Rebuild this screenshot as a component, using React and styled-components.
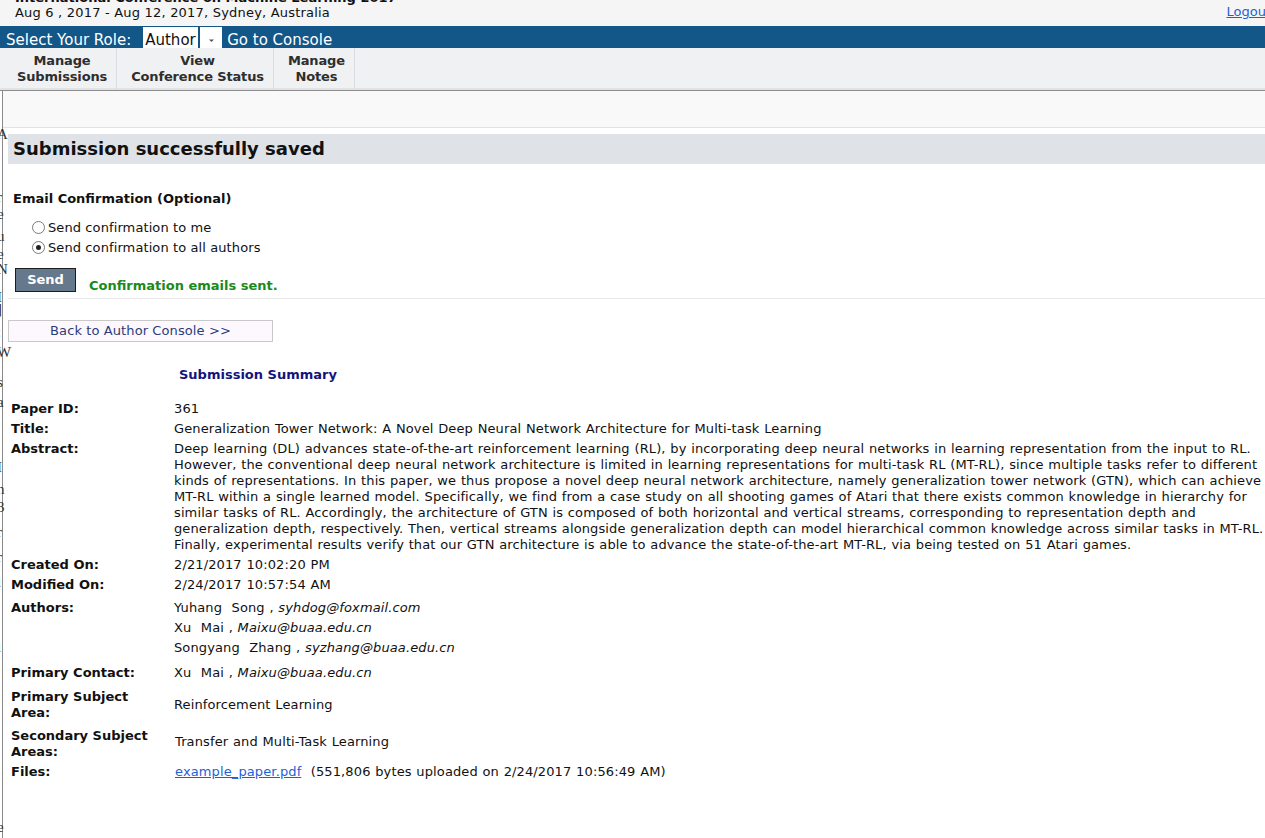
import React from "react";
import styled, { createGlobalStyle } from "styled-components";

const GlobalStyle = createGlobalStyle`
  html, body { margin: 0; padding: 0; background: #ffffff; }
  body {
    font-family: "DejaVu Sans", Verdana, sans-serif;
    font-size: 13px;
    color: #111;
    overflow: hidden;
    width: 1265px;
    height: 838px;
  }
  * { box-sizing: border-box; }
`;

const Page = styled.div`
  width: 1265px;
  height: 838px;
  overflow: hidden;
  display: flex;
  flex-direction: column;
`;

const TopHeader = styled.header`
  height: 26px;
  background: #f5f5f5;
  display: flex;
  justify-content: space-between;
  align-items: flex-start;
  padding-left: 15px;
  overflow: hidden;
`;

const ConfInfo = styled.div`
  display: flex;
  flex-direction: column;
  margin-top: -10px;
  line-height: 16px;
`;

const ConfTitle = styled.div`
  font-weight: bold;
  color: #111;
`;

const ConfDates = styled.div`
  color: #111;
  margin-top: -1px;
  letter-spacing: 0.2px;
`;

const LogoutLink = styled.a`
  color: #1f5fd6;
  text-decoration: underline;
  margin-top: 4px;
  margin-right: -6px;
  line-height: 16px;
  white-space: nowrap;
  cursor: pointer;
`;

const RoleBar = styled.div`
  height: 22px;
  background: #125787;
  display: flex;
  align-items: flex-start;
  padding: 5px 0 0 6px;
  color: #ffffff;
  font-size: 15px;
  line-height: 18px;
  overflow: hidden;
`;

const RoleLabel = styled.span`
  margin-right: 12px;
`;

const SelectBox = styled.div`
  display: flex;
  height: 22px;
  margin-top: -4px;
  gap: 2px;
  color: #111;
`;

const SelectValue = styled.div`
  background: #ffffff;
  width: 55px;
  padding: 4px 0 0 2px;
  line-height: 18px;
`;

const SelectButton = styled.div`
  background: #ffffff;
  width: 22px;
  display: flex;
  align-items: center;
  justify-content: center;
  padding-top: 5px;
`;

const ConsoleLink = styled.span`
  margin-left: 5px;
`;

const NavBar = styled.nav`
  height: 43px;
  background: #f0f1f3;
  display: flex;
  padding-left: 3px;
  border-bottom: 1px solid #8e8e8e;
  box-shadow: inset 0 -2px 0 #e2e3e5;
`;

const NavItem = styled.div`
  display: flex;
  flex-direction: column;
  align-items: center;
  justify-content: center;
  margin-left: 5px;
  padding: 0 9px;
  border-right: 1px solid #dcdde0;
  font-weight: bold;
  color: #2e2e2e;
  line-height: 16px;
  letter-spacing: -0.15px;
  text-align: center;
`;

const Lower = styled.div`
  flex: 1;
  display: flex;
  min-height: 0;
`;

const Gutter = styled.div`
  width: 3px;
  flex-shrink: 0;
  border-right: 1px solid #8a8a8a;
  display: flex;
  flex-direction: column;
  padding-top: 36px;
  font-family: "Liberation Serif", serif;
  font-size: 15px;
  line-height: 15px;
  color: #333;
  white-space: nowrap;
`;

const StrayGlyph = styled.span`
  display: block;
  margin-top: ${(p) => p.$top}px;
  margin-left: -3px;
`;

const Main = styled.div`
  flex: 1;
  display: flex;
  flex-direction: column;
  min-width: 0;
`;

const GreyStrip = styled.div`
  height: 37px;
  background: #f9f9f9;
  border-bottom: 1px solid #e2e2e2;
`;

const Content = styled.div`
  padding-left: 5px;
  display: flex;
  flex-direction: column;
`;

const TitleBar = styled.h1`
  margin: 6px 0 0;
  height: 30px;
  background: #dfe3e7;
  font-size: 18px;
  font-weight: bold;
  line-height: 30px;
  padding-left: 5px;
  color: #111;
`;

const SectionHeading = styled.div`
  margin: 27px 0 0 5px;
  font-weight: bold;
  line-height: 16px;
`;

const RadioList = styled.div`
  margin: 12px 0 0 24px;
  display: flex;
  flex-direction: column;
  gap: 4px;
  letter-spacing: 0.1px;
`;

const RadioRow = styled.label`
  display: flex;
  align-items: center;
  height: 16px;
  gap: 3px;
`;

const RadioCircle = styled.span`
  width: 13px;
  height: 13px;
  border-radius: 50%;
  border: 1px solid #7a7a7a;
  background: #ffffff;
  display: flex;
  align-items: center;
  justify-content: center;
  &::after {
    content: "";
    width: 5px;
    height: 5px;
    border-radius: 50%;
    background: ${(p) => (p.$checked ? "#222" : "transparent")};
  }
`;

const SendRow = styled.div`
  display: flex;
  align-items: flex-end;
  margin-top: 13px;
  gap: 13px;
  padding: 0 0 6px 7px;
  border-bottom: 1px solid #e8e8e8;
`;

const SendButton = styled.button`
  width: 61px;
  height: 24px;
  background: #66788b;
  border: 1px solid #1c1c1c;
  color: #ffffff;
  font-family: "DejaVu Sans", Verdana, sans-serif;
  font-weight: bold;
  font-size: 13px;
  padding: 0 0 2px;
`;

const StatusText = styled.span`
  color: #1a8a1a;
  font-weight: bold;
  line-height: 16px;
  margin-bottom: -2px;
`;

const BackBox = styled.div`
  margin-top: 21px;
  width: 265px;
  height: 22px;
  border: 1px solid #c9c9c9;
  background: #fdf8fd;
  color: #2b3c7a;
  text-align: center;
  line-height: 20px;
  letter-spacing: 0.1px;
`;

const SummaryHeading = styled.div`
  margin: 25px 0 0 171px;
  color: #14137d;
  font-weight: bold;
  line-height: 16px;
`;

const Summary = styled.div`
  margin: 16px 0 0 3px;
  display: flex;
  flex-direction: column;
`;

const Row = styled.div`
  display: grid;
  grid-template-columns: 163px 1fr;
  padding: 2px 0;
  margin-top: ${(p) => p.$mt || 0}px;
  line-height: 16px;
`;

const Label = styled.div`
  font-weight: bold;
  align-self: start;
`;

const Value = styled.div`
  align-self: ${(p) => (p.$middle ? "center" : "start")};
  margin-left: ${(p) => p.$shift || 0}px;
  margin-top: ${(p) => p.$mt || 0}px;
  letter-spacing: 0.12px;
  word-spacing: 0.45px;
  white-space: ${(p) => (p.$pre ? "pre" : "normal")};
`;

const AuthorLine = styled.div`
  line-height: 20px;
  white-space: pre;
`;

const Email = styled.i`
  font-style: italic;
`;

const FileLink = styled.a`
  color: #1f5fd6;
  text-decoration: underline;
  cursor: pointer;
`;

const abstractLines = [
  "Deep learning (DL) advances state-of-the-art reinforcement learning (RL), by incorporating deep neural networks in learning representation from the input to RL.",
  "However, the conventional deep neural network architecture is limited in learning representations for multi-task RL (MT-RL), since multiple tasks refer to different",
  "kinds of representations. In this paper, we thus propose a novel deep neural network architecture, namely generalization tower network (GTN), which can achieve",
  "MT-RL within a single learned model. Specifically, we find from a case study on all shooting games of Atari that there exists common knowledge in hierarchy for",
  "similar tasks of RL. Accordingly, the architecture of GTN is composed of both horizontal and vertical streams, corresponding to representation depth and",
  "generalization depth, respectively. Then, vertical streams alongside generalization depth can model hierarchical common knowledge across similar tasks in MT-RL.",
  "Finally, experimental results verify that our GTN architecture is able to advance the state-of-the-art MT-RL, via being tested on 51 Atari games.",
];

const strays = [
  { c: "A", t: 0 },
  { c: "r", t: 48 },
  { c: "e", t: 2 },
  { c: "u", t: 7 },
  { c: "e", t: 3 },
  { c: "N", t: 0 },
  { c: "I", t: 13 },
  { c: "]", t: -3 },
  { c: ":", t: 8 },
  { c: "W", t: 5 },
  { c: "s", t: 15 },
  { c: "a", t: 5 },
  { c: "I", t: 50 },
  { c: "n", t: 7 },
  { c: "3", t: 3 },
  { c: "r", t: 10 },
  { c: "r", t: 10 },
  { c: "l", t: 10 },
  { c: "l", t: 50 },
  { c: "e", t: 165 },
];

const Arrow = () => (
  <svg width="7" height="4" viewBox="0 0 7 4">
    <path d="M1 0.5 L3.5 3 L6 0.5 Z" fill="#555" />
  </svg>
);

export default function App() {
  return (
    <>
      <GlobalStyle />
      <Page>
        <TopHeader>
          <ConfInfo>
            <ConfTitle>International Conference on Machine Learning 2017</ConfTitle>
            <ConfDates>Aug 6 , 2017 - Aug 12, 2017, Sydney, Australia</ConfDates>
          </ConfInfo>
          <LogoutLink>Logout</LogoutLink>
        </TopHeader>
        <RoleBar>
          <RoleLabel>Select Your Role:</RoleLabel>
          <SelectBox>
            <SelectValue>Author</SelectValue>
            <SelectButton>
              <Arrow />
            </SelectButton>
          </SelectBox>
          <ConsoleLink>Go to Console</ConsoleLink>
        </RoleBar>
        <NavBar>
          <NavItem>
            <span>Manage</span>
            <span>Submissions</span>
          </NavItem>
          <NavItem>
            <span>View</span>
            <span>Conference Status</span>
          </NavItem>
          <NavItem>
            <span>Manage</span>
            <span>Notes</span>
          </NavItem>
        </NavBar>
        <Lower>
          <Gutter>
            {strays.map((s, i) => (
              <StrayGlyph key={i} $top={s.t}>
                {s.c}
              </StrayGlyph>
            ))}
          </Gutter>
          <Main>
            <GreyStrip />
            <Content>
              <TitleBar>Submission successfully saved</TitleBar>
              <SectionHeading>Email Confirmation (Optional)</SectionHeading>
              <RadioList>
                <RadioRow>
                  <RadioCircle />
                  <span>Send confirmation to me</span>
                </RadioRow>
                <RadioRow>
                  <RadioCircle $checked />
                  <span>Send confirmation to all authors</span>
                </RadioRow>
              </RadioList>
              <SendRow>
                <SendButton>Send</SendButton>
                <StatusText>Confirmation emails sent.</StatusText>
              </SendRow>
              <BackBox>Back to Author Console &gt;&gt;</BackBox>
              <SummaryHeading>Submission Summary</SummaryHeading>
              <Summary>
                <Row>
                  <Label>Paper ID:</Label>
                  <Value>361</Value>
                </Row>
                <Row>
                  <Label>Title:</Label>
                  <Value>
                    Generalization Tower Network: A Novel Deep Neural Network Architecture for Multi-task Learning
                  </Value>
                </Row>
                <Row>
                  <Label>Abstract:</Label>
                  <Value>
                    {abstractLines.map((l, i) => (
                      <React.Fragment key={i}>
                        {l}
                        {i < abstractLines.length - 1 && <br />}
                      </React.Fragment>
                    ))}
                  </Value>
                </Row>
                <Row>
                  <Label>Created On:</Label>
                  <Value>2/21/2017 10:02:20 PM</Value>
                </Row>
                <Row>
                  <Label>Modified On:</Label>
                  <Value>2/24/2017 10:57:54 AM</Value>
                </Row>
                <Row $mt={3}>
                  <Label>Authors:</Label>
                  <Value $mt={-2}>
                    <AuthorLine>
                      {"Yuhang  Song , "}
                      <Email>syhdog@foxmail.com</Email>
                    </AuthorLine>
                    <AuthorLine>
                      {"Xu  Mai , "}
                      <Email>Maixu@buaa.edu.cn</Email>
                    </AuthorLine>
                    <AuthorLine>
                      {"Songyang  Zhang , "}
                      <Email>syzhang@buaa.edu.cn</Email>
                    </AuthorLine>
                  </Value>
                </Row>
                <Row $mt={3}>
                  <Label>Primary Contact:</Label>
                  <Value $pre>
                    {"Xu  Mai , "}
                    <Email>Maixu@buaa.edu.cn</Email>
                  </Value>
                </Row>
                <Row $mt={4}>
                  <Label>
                    Primary Subject
                    <br />
                    Area:
                  </Label>
                  <Value $middle>Reinforcement Learning</Value>
                </Row>
                <Row $mt={3}>
                  <Label>
                    Secondary Subject
                    <br />
                    Areas:
                  </Label>
                  <Value $middle $shift={1} $mt={-4}>
                    Transfer and Multi-Task Learning
                  </Value>
                </Row>
                <Row>
                  <Label>Files:</Label>
                  <Value $shift={1} $pre>
                    <FileLink>example_paper.pdf</FileLink>
                    {"  (551,806 bytes uploaded on 2/24/2017 10:56:49 AM)"}
                  </Value>
                </Row>
              </Summary>
            </Content>
          </Main>
        </Lower>
      </Page>
    </>
  );
}
